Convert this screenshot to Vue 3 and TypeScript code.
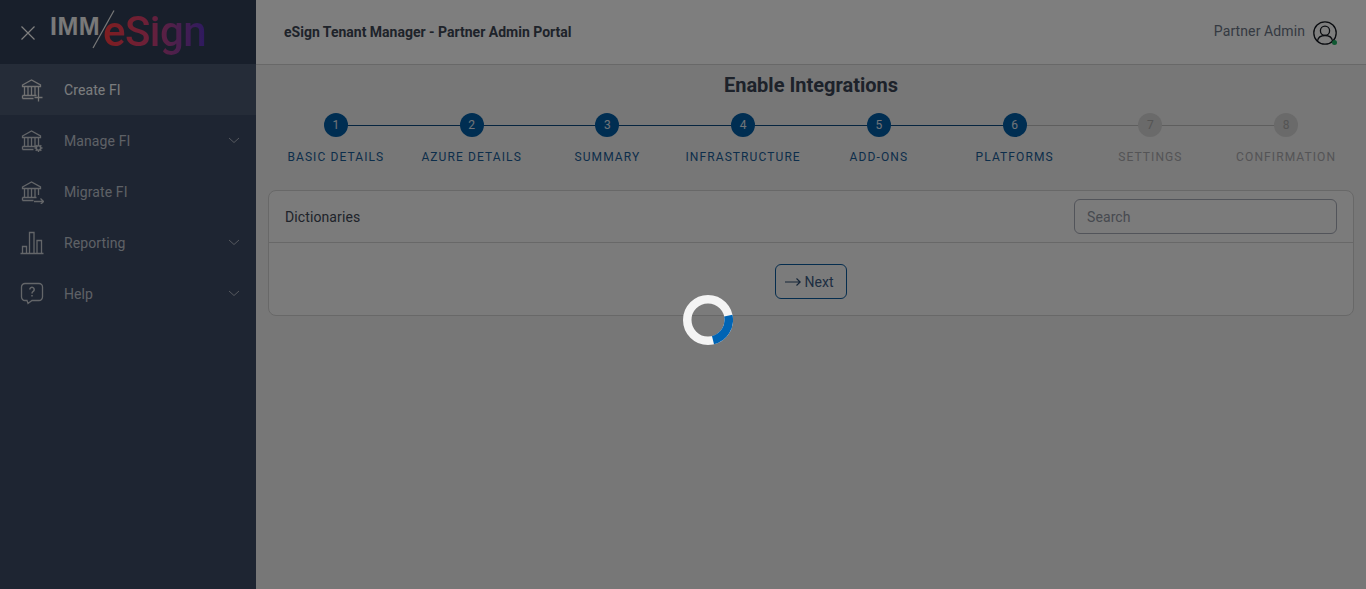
<script setup lang="ts">
interface Step { n: number; label: string; done: boolean }
const labels = ['BASIC DETAILS', 'AZURE DETAILS', 'SUMMARY', 'INFRASTRUCTURE', 'ADD-ONS', 'PLATFORMS', 'SETTINGS', 'CONFIRMATION']
const steps: Step[] = labels.map((label, i) => ({ n: i + 1, label, done: i < 6 }))
const nav = [
  { label: 'Create FI', icon: 'create', active: true, chevron: false },
  { label: 'Manage FI', icon: 'manage', active: false, chevron: true },
  { label: 'Migrate FI', icon: 'migrate', active: false, chevron: false },
  { label: 'Reporting', icon: 'report', active: false, chevron: true },
  { label: 'Help', icon: 'help', active: false, chevron: true },
]
</script>

<template>
  <div class="app">
    <aside class="sidebar">
      <div class="brand">
        <svg class="close" width="16" height="16" viewBox="0 0 16 16" fill="none" stroke="currentColor" stroke-width="1.2">
          <path d="M1.5 1.5 14.5 14.5M14.5 1.5 1.5 14.5" />
        </svg>
        <div class="logo">
          <span class="imm">IMM</span>
          <svg class="slash" width="24" height="40" viewBox="0 0 24 40" fill="none" stroke="currentColor" stroke-width="1.2">
            <path d="M22 .5 1 38" />
          </svg>
          <span class="esign">eSign</span>
        </div>
      </div>
      <nav class="nav">
        <div v-for="item in nav" :key="item.label" class="nav-item" :class="{ active: item.active }">
          <svg class="nav-icon" width="24" height="24" viewBox="0 0 24 24" fill="none" stroke="currentColor" stroke-width="1.3">
            <template v-if="item.icon === 'report'">
              <path d="M.5 22.500h23M2.500 22.500v-7h4v7M9.500 22.500V1.500h4.500v21M17 22.500V9.500h4.500v13" />
            </template>
            <template v-else-if="item.icon === 'help'">
              <path d="M5 1.500h14a3.500 3.500 0 0 1 3.500 3.500v10a3.500 3.500 0 0 1-3.500 3.500h-7l-4 3-1-3H5A3.500 3.500 0 0 1 1.500 15V5A3.500 3.500 0 0 1 5 1.500Z" />
              <path d="M9.800 7.500a2.200 2.200 0 1 1 3.400 1.900c-.8.5-1.200 1-1.200 2M12 13v1.500" stroke-width="1.500" />
            </template>
            <template v-else>
              <path d="M2.500 7 11.500 2l9 5v1.500h-18ZM4.500 9v8M8 9v8M15 9v8M18.500 9v6M11.500 9v8M2.500 17.500h14M2.500 20.500h11M2.500 17.500v3" />
              <path v-if="item.icon === 'create'" d="M18.500 15v8.500M14.500 19.500h8" />
              <g v-if="item.icon === 'manage'">
                <circle cx="18.500" cy="19" r="2.200" stroke-width="1.600" />
                <path d="M18.500 15v1.500M18.500 21.500V23M14.500 19H16M21 19h1.500M15.700 16.200l1 1M20.300 20.800l1 1M21.300 16.200l-1 1M16.700 20.800l-1 1" stroke-width="1.400" />
              </g>
              <path v-if="item.icon === 'migrate'" d="M14 21.500h9.500M20.500 18.500l3 3-3 3" />
            </template>
          </svg>
          <span class="nav-label">{{ item.label }}</span>
          <svg v-if="item.chevron" class="chev" width="12" height="7" viewBox="0 0 12 7" fill="none" stroke="currentColor" stroke-width="1">
            <path d="M1 1l5 4.500L11 1" />
          </svg>
        </div>
      </nav>
    </aside>

    <div class="main">
      <header class="topbar">
        <span class="portal">eSign Tenant Manager - Partner Admin Portal</span>
        <div class="user">
          <span class="user-name">Partner Admin</span>
          <span class="avatar">
            <svg width="24" height="24" viewBox="0 0 24 24" fill="none" stroke="currentColor" stroke-width="1.300">
              <circle cx="12" cy="12" r="11.200" />
              <circle cx="12" cy="9.800" r="4.600" />
              <path d="M4.500 20c.5-3.500 3.500-5.500 7.500-5.500s7 2 7.500 5.500" />
            </svg>
            <i class="status"></i>
          </span>
        </div>
      </header>

      <section class="content">
        <h1 class="title">Enable Integrations</h1>
        <ol class="steps">
          <li v-for="s in steps" :key="s.n" class="step" :class="{ done: s.done, solid: s.n < 6 }">
            <span class="dot">{{ s.n }}</span>
            <span class="step-label">{{ s.label }}</span>
          </li>
        </ol>

        <div class="card">
          <div class="card-head">
            <span class="card-title">Dictionaries</span>
            <input class="search" type="text" placeholder="Search" />
          </div>
          <div class="card-body">
            <button class="next" type="button">
              <svg width="16" height="10" viewBox="0 0 16 10" fill="none" stroke="currentColor" stroke-width="1.100">
                <path d="M0 5h15.200M11.500 1.500 15.200 5l-3.700 3.500" />
              </svg>
              <span>Next</span>
            </button>
          </div>
        </div>
      </section>
    </div>

    <div class="overlay"></div>
    <svg class="spinner" width="50" height="50" viewBox="0 0 50 50" fill="none" stroke-width="8.500">
      <circle cx="25" cy="25" r="20.750" stroke="#f4f4f4" />
      <circle cx="25" cy="25" r="20.750" stroke="#0064b4" pathLength="360" stroke-dasharray="88 272" transform="rotate(-12 25 25)" />
    </svg>
  </div>
</template>

<style>
html, body { margin: 0; }
</style>

<style scoped>
.app {
  display: flex;
  height: 589px;
  overflow: hidden;
  font-family: Roboto, "Liberation Sans", sans-serif;
  background: #eeeeee;
}
.sidebar {
  width: 256px;
  flex: none;
  background: #3c4a64;
  color: #bcc2cc;
}
.brand {
  height: 64px;
  display: flex;
  align-items: center;
  padding-left: 20px;
  background: #303e56;
  color: #f2f2f2;
}
.close { margin-top: 2px; color: #fff; }
.logo {
  display: flex;
  align-items: flex-start;
  margin-left: 14px;
  height: 64px;
  position: relative;
}
.imm {
  font: 700 25px/1 "Liberation Sans", sans-serif;
  color: #f2f2f2;
  margin-top: 14px;
  letter-spacing: .5px;
}
.slash { margin: 10px 0 0 -8px; color: #f2f2f2; }
.esign {
  font: 500 42px/1 Roboto, sans-serif;
  margin: 11px 0 0 -13px;
  letter-spacing: -.6px;
  padding-bottom: 4px;
  background: linear-gradient(90deg, #ff3c40 0%, #d84070 42%, #9a4098 70%, #5a34c0 100%);
  -webkit-background-clip: text;
  background-clip: text;
  color: transparent;
}
.nav-item {
  height: 51px;
  display: flex;
  align-items: center;
  padding-left: 20px;
  font-size: 14px;
  letter-spacing: .1px;
}
.nav-item.active { background: #4a5870; color: #f6fafc; }
.nav-icon { flex: none; color: #c8ccd2; }
.nav-item.active .nav-icon { color: #e4e4e4; }
.nav-label { margin-left: 20px; flex: 1; }
.chev { margin-right: 16px; color: #aab0bc; }
.main {
  flex: 1;
  min-width: 0;
}
.topbar {
  height: 65px;
  box-sizing: border-box;
  border-bottom: 1px solid #d0d0d0;
  background: #fcfcfc;
  display: flex;
  align-items: center;
  justify-content: space-between;
  padding: 0 29px 0 28px;
}
.portal {
  font-size: 14px;
  font-weight: 700;
  color: #3c4654;
}
.user { display: flex; align-items: center; gap: 8px; color: #6a7484; }
.user-name { font-size: 14px; letter-spacing: .1px; margin-top: -2px; }
.avatar { position: relative; display: flex; color: #141820; margin-top: 1px; }
.status {
  position: absolute;
  right: 0;
  bottom: 0;
  width: 5px;
  height: 5px;
  border-radius: 50%;
  background: #1fb064;
}
.content { padding: 0 12px; }
.title {
  margin: 0;
  padding-top: 9px;
  height: 39px;
  text-align: center;
  font-size: 20px;
  line-height: 23px;
  font-weight: 700;
  color: #3a4454;
}
.steps {
  list-style: none;
  margin: 0;
  padding: 0;
  display: grid;
  grid-template-columns: repeat(8, 1fr);
}
.step {
  position: relative;
  display: flex;
  flex-direction: column;
  align-items: center;
  gap: 13px;
  color: #777;
}
.step:not(:last-child)::after {
  content: "";
  position: absolute;
  left: 50%;
  width: 100%;
  top: 12px;
  height: 1px;
  background: #bcbcbc;
}
.step.solid::after { background: #0c4a80; }
.dot {
  position: relative;
  z-index: 1;
  width: 24px;
  height: 24px;
  border-radius: 50%;
  background: #d4d4d4;
  color: #a8a8a8;
  font-size: 12px;
  line-height: 24px;
  text-align: center;
}
.step.done .dot { background: #005ca4; color: #e0e8f0; }
.step-label {
  font-size: 12px;
  line-height: 14px;
  letter-spacing: 1.1px;
  color: #a8a8ac;
  white-space: nowrap;
}
.step.done .step-label { color: #1a5c96; }
.card {
  margin-top: 26px;
  height: 126px;
  box-sizing: border-box;
  border: 1px solid #d0d0d0;
  border-radius: 8px;
  background: #f6f6f6;
}
.card-head {
  height: 52px;
  box-sizing: border-box;
  border-bottom: 1px solid #d0d0d0;
  display: flex;
  align-items: center;
  justify-content: space-between;
  padding: 0 16px;
}
.card-title { font-size: 14px; color: #3e4654; letter-spacing: .1px; }
.search {
  width: 263px;
  height: 35px;
  box-sizing: border-box;
  padding: 0 12px;
  border: 1px solid #a4a8b4;
  border-radius: 6px;
  background: transparent;
  font: 14px Roboto, sans-serif;
  letter-spacing: .1px;
  outline: none;
}
.search::placeholder { color: #8e94a0; opacity: 1; }
.card-body {
  display: flex;
  justify-content: center;
  padding-top: 21px;
}
.next {
  width: 72px;
  height: 35px;
  box-sizing: border-box;
  display: flex;
  align-items: center;
  justify-content: center;
  gap: 4px;
  padding: 0 4px 0 0;
  border: 1px solid #0a5a9c;
  border-radius: 6px;
  background: transparent;
  color: #3c5c84;
  font: 14px Roboto, sans-serif;
}
.next svg { color: #2a4a70; }
.overlay {
  position: fixed;
  inset: 0;
  z-index: 10;
  background: rgba(0, 0, 0, .5);
}
.spinner {
  position: fixed;
  z-index: 11;
  left: 683px;
  top: 295px;
}
</style>
